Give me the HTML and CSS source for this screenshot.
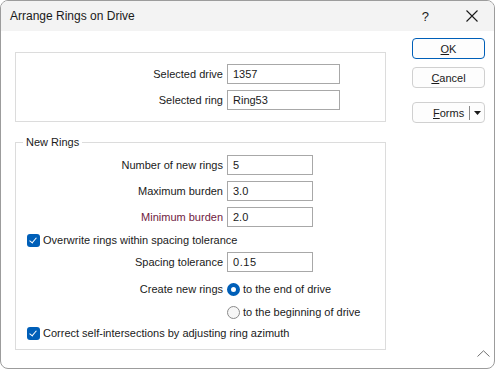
FILE: index.html
```html
<!DOCTYPE html>
<html lang="en">
<head>
  <meta charset="UTF-8" />
  <title>Arrange Rings on Drive</title>
  <link rel="stylesheet" href="styles.css">
</head>
<body>
  <!-- Dialog window -->
  <div class="window">
    <div class="titlebar">
      <span class="title">Arrange Rings on Drive</span>
      <span class="help">?</span>
      <svg class="close" width="12" height="12" viewBox="0 0 12 12">
        <path d="M0.5 0.5 L11.5 11.5 M11.5 0.5 L0.5 11.5" stroke="#1a1a1a" stroke-width="1.1" fill="none"/>
      </svg>
    </div>

    <div class="content">
      <div class="main">
        <!-- Selection -->
        <div class="group group-top">
          <div class="row">
            <label class="label">Selected drive</label>
            <input class="field wide" type="text" value="1357" />
          </div>
          <div class="row">
            <label class="label">Selected ring</label>
            <input class="field wide" type="text" value="Ring53" />
          </div>
        </div>

        <!-- New rings -->
        <div class="group group-rings">
          <span class="legend">New Rings</span>
          <div class="row">
            <label class="label">Number of new rings</label>
            <input class="field" type="text" value="5" />
          </div>
          <div class="row">
            <label class="label">Maximum burden</label>
            <input class="field" type="text" value="3.0" />
          </div>
          <div class="row">
            <label class="label required">Minimum burden</label>
            <input class="field" type="text" value="2.0" />
          </div>
          <div class="check-row overwrite">
            <span class="checkbox"></span>
            <span>Overwrite rings within spacing tolerance</span>
          </div>
          <div class="row tolerance">
            <label class="label">Spacing tolerance</label>
            <input class="field mono" type="text" value="0.15" />
          </div>
          <div class="row radio-row first-radio">
            <label class="label">Create new rings</label>
            <span class="radio checked"></span>
            <span>to the end of drive</span>
          </div>
          <div class="row radio-row second-radio">
            <span class="label"></span>
            <span class="radio"></span>
            <span>to the beginning of drive</span>
          </div>
          <div class="check-row correct">
            <span class="checkbox"></span>
            <span>Correct self-intersections by adjusting ring azimuth</span>
          </div>
        </div>
      </div>

      <!-- Buttons -->
      <div class="side">
        <button class="btn btn-ok"><u>O</u>K</button>
        <button class="btn btn-cancel"><u>C</u>ancel</button>
        <div class="btn btn-forms">
          <span class="forms-text"><u>F</u>orms</span>
          <span class="forms-sep"></span>
          <svg class="forms-arrow" width="7" height="4" viewBox="0 0 7 4">
            <path d="M0 0 H7 L3.5 4 Z" fill="#1a1a1a"/>
          </svg>
        </div>
      </div>
    </div>

    <svg class="grip" width="13" height="7" viewBox="0 0 13 7">
      <path d="M0.5 6.5 L6.5 0.8 L12.5 6.5" stroke="#707070" stroke-width="1" fill="none"/>
    </svg>
  </div>
</body>
</html>
```

FILE: styles.css
```css
/* Page */
html, body {
  margin: 0;
  padding: 0;
  background: #ffffff;
}

body {
  font-family: "Liberation Sans", Arial, sans-serif;
  font-size: 11px;
  color: #1a1a1a;
}

/* Window frame */
.window {
  position: relative;
  width: 495px;
  height: 369px;
  box-sizing: border-box;
  border: 1px solid #9c9c9c;
  border-radius: 8px;
  overflow: hidden;
  background: #ffffff;
}

.titlebar {
  height: 30px;
  display: flex;
  align-items: center;
  background: #f3f3f3;
  padding-left: 9px;
}

.title {
  font-size: 12px;
  flex-grow: 1;
}

.help {
  font-size: 13px;
  margin-right: 37px;
}

.close {
  margin-right: 16px;
}

/* Layout */
.content {
  display: flex;
}

.main {
  margin-left: 14px;
  width: 371px;
}

.group {
  position: relative;
  border: 1px solid #dcdcdc;
  box-sizing: border-box;
}

.group-top {
  margin-top: 21px;
  height: 70px;
  padding-top: 11px;
}

.group-rings {
  margin-top: 20px;
  height: 208px;
  padding-top: 12px;
}

.legend {
  position: absolute;
  top: -8px;
  left: 7px;
  padding: 0 3px;
  background: #ffffff;
  line-height: 15px;
}

/* Label + field rows */
.row {
  display: flex;
  align-items: center;
  height: 20px;
  margin-bottom: 6px;
}

.label {
  width: 207px;
  padding-right: 4px;
  text-align: right;
  flex-shrink: 0;
}

.required {
  color: #701a3e;
}

.field {
  width: 86px;
  height: 20px;
  box-sizing: border-box;
  border: 1px solid #a8a8a8;
  padding: 0 0 0 5px;
  margin: 0;
  font-family: "Liberation Sans", Arial, sans-serif;
  font-size: 11px;
  color: #1a1a1a;
  background: #ffffff;
  outline: none;
}

.field.wide {
  width: 113px;
}

.field.mono {
  letter-spacing: 0.6px;
}

/* Checkboxes */
.check-row {
  display: flex;
  align-items: center;
  gap: 3px;
  height: 20px;
  padding-left: 11px;
}

.overwrite {
  margin-top: -3px;
  margin-bottom: 2px;
}

.tolerance {
  margin-bottom: 7px;
}

.correct {
  margin-top: -1px;
}

.checkbox {
  position: relative;
  width: 13px;
  height: 13px;
  border-radius: 3px;
  background: #005fb8;
}

.checkbox::after {
  content: "";
  position: absolute;
  left: 4px;
  top: 2px;
  width: 3px;
  height: 6px;
  border: solid #ffffff;
  border-width: 0 1px 1px 0;
  transform: rotate(40deg);
}

/* Radios */
.radio-row {
  gap: 3px;
}

.first-radio {
  margin-bottom: 3px;
}

.second-radio {
  margin-bottom: 2px;
}

.radio-row .label {
  margin-right: -3px;
}

.radio {
  width: 13px;
  height: 13px;
  box-sizing: border-box;
  border-radius: 50%;
  border: 1px solid #8a8a8a;
  background: #f6f6f6;
}

.radio.checked {
  border: 4px solid #005fb8;
  background: #ffffff;
}

/* Buttons */
.side {
  margin-left: 26px;
  margin-top: 7px;
  display: flex;
  flex-direction: column;
  width: 73px;
}

.btn {
  height: 21px;
  box-sizing: border-box;
  border: 1px solid #d0d0d0;
  border-radius: 4px;
  background: #fdfdfd;
  font-family: "Liberation Sans", Arial, sans-serif;
  font-size: 11px;
  color: #1a1a1a;
  padding: 0;
  margin: 0;
}

.btn-ok {
  border-color: #005fb8;
}

.btn-cancel {
  margin-top: 8px;
}

.btn-forms {
  margin-top: 14px;
  display: flex;
  align-items: center;
}

.forms-text {
  margin-left: 20px;
}

.forms-sep {
  width: 1px;
  height: 14px;
  background: #8a8a8a;
  margin-left: 5px;
}

.forms-arrow {
  margin-left: 4px;
}

/* Bottom-right grip */
.grip {
  position: absolute;
  right: 4px;
  bottom: 11px;
}
```
